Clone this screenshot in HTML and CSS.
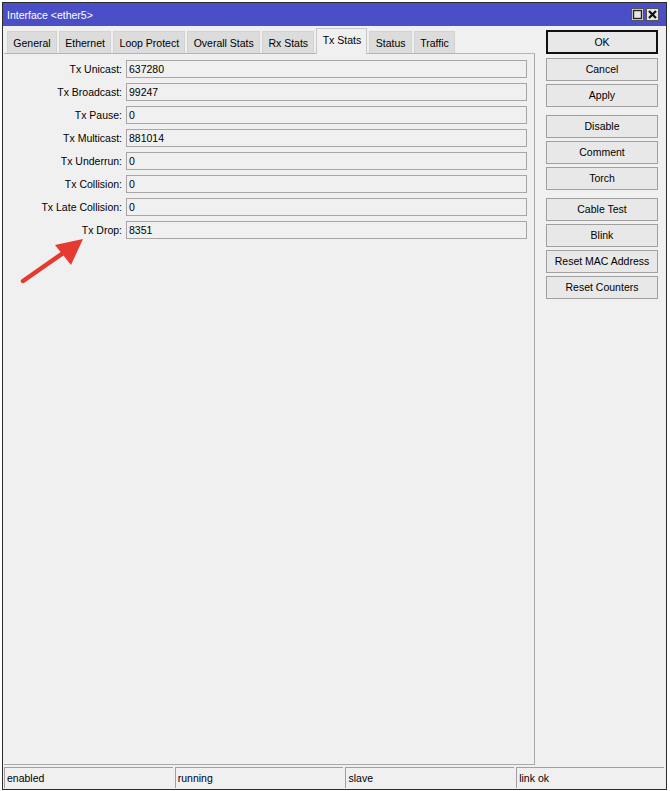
FILE: index.html
```html
<!DOCTYPE html>
<html>
<head>
<meta charset="utf-8">
<link rel="stylesheet" href="styles.css">
</head>
<body>
<div class="window">
  <div class="titlebar">
    <span class="title">Interface &lt;ether5&gt;</span>
    <div class="tbtns">
      <span class="tbtn"><svg width="11" height="11" viewBox="0 0 11 11"><rect x="1.5" y="1.5" width="8" height="8" fill="none" stroke="#222" stroke-width="1.4"/></svg></span>
      <span class="tbtn"><svg width="11" height="11" viewBox="0 0 11 11"><path d="M2 2 L9 9 M9 2 L2 9" stroke="#111" stroke-width="2.2"/></svg></span>
    </div>
  </div>
  <div class="main">
    <div class="left">
      <div class="tabs">
        <div class="tab">General</div>
        <div class="tab">Ethernet</div>
        <div class="tab">Loop Protect</div>
        <div class="tab">Overall Stats</div>
        <div class="tab">Rx Stats</div>
        <div class="tab active">Tx Stats</div>
        <div class="tab">Status</div>
        <div class="tab">Traffic</div>
      </div>
      <div class="panel">
        <div class="row"><span class="lbl">Tx Unicast:</span><span class="fld">637280</span></div>
        <div class="row"><span class="lbl">Tx Broadcast:</span><span class="fld">99247</span></div>
        <div class="row"><span class="lbl">Tx Pause:</span><span class="fld">0</span></div>
        <div class="row"><span class="lbl">Tx Multicast:</span><span class="fld">881014</span></div>
        <div class="row"><span class="lbl">Tx Underrun:</span><span class="fld">0</span></div>
        <div class="row"><span class="lbl">Tx Collision:</span><span class="fld">0</span></div>
        <div class="row"><span class="lbl">Tx Late Collision:</span><span class="fld">0</span></div>
        <div class="row"><span class="lbl">Tx Drop:</span><span class="fld">8351</span></div>
      </div>
    </div>
    <div class="buttons">
      <div class="btn default">OK</div>
      <div class="btn">Cancel</div>
      <div class="btn">Apply</div>
      <div class="btn group">Disable</div>
      <div class="btn">Comment</div>
      <div class="btn">Torch</div>
      <div class="btn group">Cable Test</div>
      <div class="btn">Blink</div>
      <div class="btn">Reset MAC Address</div>
      <div class="btn">Reset Counters</div>
    </div>
  </div>
  <div class="statusbar">
    <div class="cell">enabled</div>
    <div class="cell">running</div>
    <div class="cell">slave</div>
    <div class="cell">link ok</div>
  </div>
</div>
<svg class="arrow" width="100" height="60" viewBox="0 0 100 60">
  <line x1="23" y1="50" x2="66" y2="20" stroke="#e53a30" stroke-width="4.5" stroke-linecap="round"/>
  <polygon points="83,8 55,14 71,34" fill="#e53a30"/>
</svg>
</body>
</html>
```
FILE: styles.css
```css
html, body {
  margin: 0;
  padding: 0;
  background: #ffffff;
  font-family: "Liberation Sans", Arial, sans-serif;
  font-size: 10.5px;
  color: #000;
}
.window {
  position: relative;
  margin: 2px 0 0 2px;
  width: 665px;
  height: 788px;
  border: 1px solid #2b2b2b;
  background: #f0f0f0;
  display: flex;
  flex-direction: column;
  box-sizing: border-box;
}
.titlebar {
  height: 23px;
  background: #4a4fc8;
  color: #fff;
  display: flex;
  align-items: center;
  justify-content: space-between;
  padding: 0 7px 0 4px;
  flex: none;
}
.title { font-size: 10.5px; }
.tbtns { display: flex; gap: 2px; }
.tbtn {
  width: 13px;
  height: 13px;
  background: #e6e6e6;
  border: 1px solid #555;
  display: flex;
  align-items: center;
  justify-content: center;
  box-sizing: border-box;
}
.main {
  flex: 1;
  display: flex;
  min-height: 0;
}
.left {
  width: 531px;
  margin-left: 1px;
  display: flex;
  flex-direction: column;
}
.tabs {
  display: flex;
  align-items: flex-end;
  gap: 2px;
  padding-left: 3px;
  height: 27px;
  flex: none;
}
.tab {
  height: 22px;
  line-height: 22px;
  padding: 0 5.3px;
  background: #dcdcdc;
  border: 1px solid #d2d2d2;
  border-bottom: none;
  box-sizing: border-box;
}
.tab.active {
  height: 26px;
  line-height: 22px;
  background: #f0f0f0;
  border: 1px solid #c8c8c8;
  border-bottom: none;
  margin-bottom: -1px;
  position: relative;
}
.panel {
  flex: 1;
  border-top: 1px solid #b4b4b4;
  border-right: 1px solid #a8a8a8;
  border-bottom: 1px solid #a8a8a8;
  padding: 6px 7px 0 0;
  display: flex;
  flex-direction: column;
  gap: 5px;
}
.row {
  display: flex;
  align-items: center;
  gap: 4px;
  height: 18px;
}
.lbl {
  width: 118px;
  text-align: right;
  flex: none;
}
.fld {
  flex: 1;
  height: 18px;
  line-height: 16px;
  border: 1px solid #a6a6a6;
  box-sizing: border-box;
  padding-left: 2px;
  background: #f0f0f0;
}
.buttons {
  margin-left: 11px;
  width: 112px;
  padding-top: 4px;
  display: flex;
  flex-direction: column;
  gap: 3px;
}
.btn {
  height: 23px;
  line-height: 21px;
  text-align: center;
  border: 1px solid #a0a0a0;
  background: #e8e8e8;
  box-sizing: border-box;
}
.btn.default {
  height: 24px;
  border: 2px solid #111;
  line-height: 20px;
  margin-bottom: 1px;
}
.btn.group { margin-top: 5px; }
.statusbar {
  height: 24px;
  flex: none;
  display: flex;
  gap: 2px;
  padding: 2px 2px 0 1px;
  box-sizing: border-box;
}
.cell {
  width: 169px;
  height: 21px;
  line-height: 20px;
  border-top: 1px solid #a0a0a0;
  border-left: 1px solid #a0a0a0;
  padding-left: 2px;
  box-sizing: border-box;
}
.cell:last-child { width: 148px; }
.arrow {
  position: absolute;
  left: 0;
  top: 231px;
}
```
